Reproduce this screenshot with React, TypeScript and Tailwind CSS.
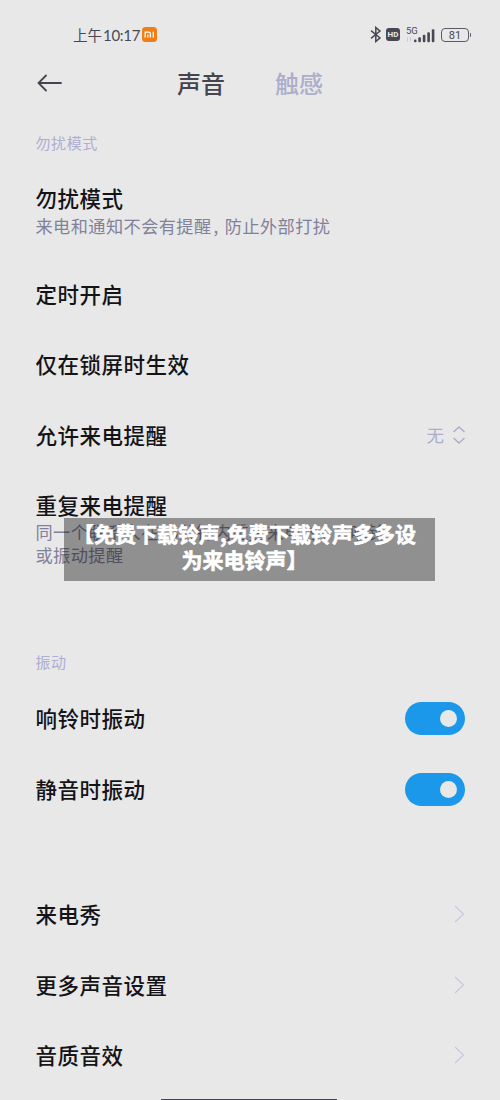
import { clsx } from 'clsx';

const dndRows = [
  { id: 'schedule', title: '定时开启' },
  { id: 'locked', title: '仅在锁屏时生效' },
  { id: 'calls', title: '允许来电提醒', value: '无' },
];

const vibrationRows = [
  { id: 'ring', title: '响铃时振动', on: true },
  { id: 'silent', title: '静音时振动', on: true },
];

const moreRows = [
  { id: 'show', title: '来电秀' },
  { id: 'more', title: '更多声音设置' },
  { id: 'quality', title: '音质音效' },
];

const titleClass = 'text-[21.5px] leading-7 tracking-[0.5px] font-medium text-[#141418]';
const descClass = 'text-[17.2px] leading-[23px] tracking-[0.42px] text-[#81819a] whitespace-nowrap';

function StatusBar() {
  return (
    <div className="flex h-[69px] items-center justify-between pr-[29px] pl-[73px] text-[#484855]">
      <div className="flex items-center">
        <span className="font-['Noto_Sans_CJK_SC',sans-serif] text-[14.5px] leading-5">上午</span>
        <span className="w-[37px] pl-px font-['Lato',sans-serif] text-[15px] leading-5 tracking-[-0.3px]">10:17</span>
        <svg className="ml-[3px]" width="15" height="15" viewBox="0 0 15 15" fill="none">
          <rect width="15" height="15" rx="3.5" fill="#f07d16" />
          <path d="M3.2 10.500V5.200h3.400q1.800 0 1.800 1.800v3.500M5.800 7.400v3.100M11.300 4.700v5.800" stroke="#fff" strokeWidth="1.300" />
        </svg>
      </div>
      <div className="flex items-center">
        <svg width="12" height="17" viewBox="0 0 12 17" fill="none" stroke="currentColor" strokeWidth="1.5">
          <path d="M1 4.7l9 7.2-4.200 3.600V1.500L10 5.100l-9 7.200" />
        </svg>
        <div className="ml-1 flex h-[13px] w-[14px] items-center justify-center rounded-[3px] bg-[#484855] font-['Roboto',sans-serif] text-[8px] font-bold text-[#e8e8e8]">
          HD
        </div>
        <div className="relative ml-[6px] h-[16px] w-[29px]">
          <span className="absolute -top-px left-0 font-['Roboto',sans-serif] text-[9.5px] leading-[9px]">5G</span>
          <svg width="29" height="16" viewBox="0 0 29 16" fill="currentColor">
            <path d="M1.5 14.5v-4M4.500 10v4" stroke="#c7c7e0" strokeWidth="1" />
            <rect x="8" y="12.500" width="2.500" height="2.800" rx="1" />
            <rect x="12.300" y="10.300" width="2.600" height="5" rx="1" />
            <rect x="16.800" y="7.800" width="2.600" height="7.500" rx="1" />
            <rect x="21.300" y="5.300" width="2.600" height="10" rx="1" />
            <rect x="25.800" y="2.300" width="2.600" height="13" rx="1" />
          </svg>
        </div>
        <div className="ml-[6px] flex h-[14px] w-[28px] items-center justify-center rounded-[4px] border-[1.5px] border-[#5c5c69] pt-px font-['Roboto',sans-serif] text-[11px] leading-none">
          81
        </div>
        <div className="ml-px h-1 w-px rounded-r bg-[#5c5c69]" />
      </div>
    </div>
  );
}

function Chevron() {
  return (
    <svg width="11" height="18" viewBox="0 0 11 18" fill="none" stroke="#c6c8e2" strokeWidth="1.2">
      <path d="M1 1l8.500 8L1 17" />
    </svg>
  );
}

function Toggle({ on }: { on: boolean }) {
  return (
    <button
      role="switch"
      aria-checked={on}
      className={clsx(
        'flex h-[33px] w-[60px] items-center rounded-full px-2',
        on ? 'justify-end bg-[#1b98ea]' : 'justify-start bg-gray-300'
      )}
    >
      <span className="size-[17px] rounded-full bg-[#e8e8e8]" />
    </button>
  );
}

export default function App() {
  return (
    <div className="relative flex h-[1100px] w-[500px] flex-col overflow-hidden bg-[#e8e8e8] font-['Noto_Sans_CJK_SC',sans-serif]">
      <StatusBar />

      {/* Tabs */}
      <header className="flex h-7 items-center pl-[37px]">
        <svg width="25" height="18" viewBox="0 0 25 18" fill="none" stroke="#45454f" strokeWidth="1.8" strokeLinecap="round">
          <path d="M9 1.500L1.500 9 9 16.500M1.500 9H24" />
        </svg>
        <nav className="-mt-px ml-[115px] flex gap-[50px] text-2xl leading-7">
          <span className="font-medium text-[#45454f]">声音</span>
          <span className="font-medium text-[#acaecb]">触感</span>
        </nav>
      </header>

      {/* Do not disturb */}
      <section className="pt-[31px] pr-[35px] pl-[35.5px]">
        <h2 className="text-[15px] leading-[30px] tracking-[0.6px] text-[#acaed2]">勿扰模式</h2>
        <div className="h-[100.3px] pt-[26px]">
          <h3 className={titleClass}>勿扰模式</h3>
          <p className={clsx(descClass, 'mt-[2px]')}>
            来电和通知不会有提醒<span className="mr-[6px] ml-[2px]">,</span>防止外部打扰
          </p>
        </div>
        {dndRows.map((row) => (
          <div key={row.id} className="flex h-[70.7px] items-center justify-between">
            <h3 className={titleClass}>{row.title}</h3>
            {row.value && (
              <div className="flex items-center gap-[9px] text-[#acaecb]">
                <span className="text-[17.5px] leading-6">{row.value}</span>
                <svg width="12" height="18" viewBox="0 0 12 18" fill="none" stroke="currentColor" strokeWidth="1.5">
                  <path d="M.5 6L6 1l5.500 5M.5 12L6 17l5.500-5" />
                </svg>
              </div>
            )}
          </div>
        ))}
        <div className="h-[177px] pt-[20.5px]">
          <h3 className={titleClass}>重复来电提醒</h3>
          <p className={clsx(descClass, 'mt-[1.5px]')}>
            同一个联系人在15分钟内重复来电时<span className="mr-[6px] ml-[2px]">,</span>会响铃
            <br />
            或振动提醒
          </p>
        </div>
      </section>

      {/* Vibration */}
      <section className="pr-[35px] pl-[35.5px]">
        <h2 className="text-[15px] leading-[30px] tracking-[0.6px] text-[#acaed2]">振动</h2>
        <div className="pt-[5.5px]">
          {vibrationRows.map((row) => (
            <div key={row.id} className="flex h-[70.8px] items-center justify-between">
              <h3 className={titleClass}>{row.title}</h3>
              <Toggle on={row.on} />
            </div>
          ))}
        </div>
      </section>

      {/* More */}
      <section className="pt-[54px] pr-[35px] pl-[35.5px]">
        {moreRows.map((row) => (
          <div key={row.id} className="flex h-[70.8px] items-center justify-between">
            <h3 className={titleClass}>{row.title}</h3>
            <Chevron />
          </div>
        ))}
      </section>

      {/* Caption over the list */}
      <div className="absolute top-[518px] left-16 h-[63px] w-[371px] bg-black/38 pt-[2px] pr-[10px] text-center text-[21px] leading-[26px] font-bold whitespace-nowrap text-white [-webkit-text-stroke:0.6px_white]">
        【免费下载铃声,免费下载铃声多多设
        <br />
        为来电铃声】
      </div>
      <div className="absolute bottom-0 left-[161px] h-px w-44 bg-[#45454f]" />
    </div>
  );
}
